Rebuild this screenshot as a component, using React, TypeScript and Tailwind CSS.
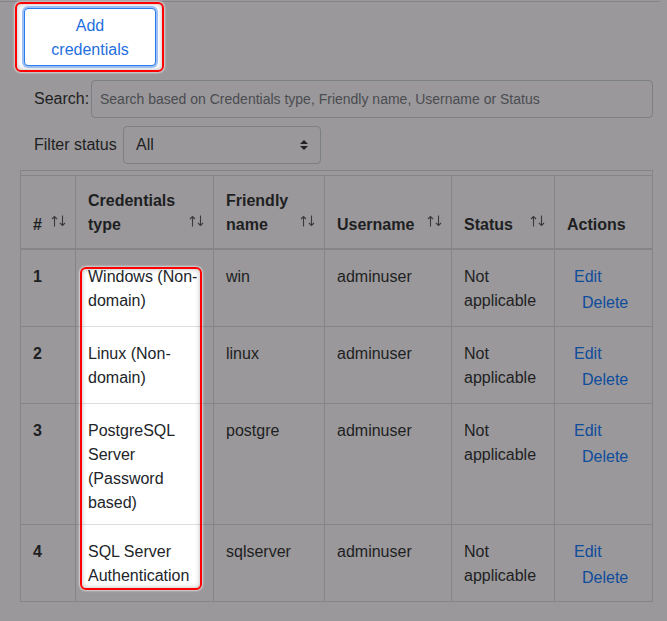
import { ReactNode } from 'react';

type Row = {
  id: number;
  type: string;
  name: string;
  user: string;
  status: string;
};

const ROWS: Row[] = [
  { id: 1, type: 'Windows (Non-domain)', name: 'win', user: 'adminuser', status: 'Not applicable' },
  { id: 2, type: 'Linux (Non-domain)', name: 'linux', user: 'adminuser', status: 'Not applicable' },
  { id: 3, type: 'PostgreSQL Server (Password based)', name: 'postgre', user: 'adminuser', status: 'Not applicable' },
  { id: 4, type: 'SQL Server Authentication', name: 'sqlserver', user: 'adminuser', status: 'Not applicable' },
];

const SortIcon = () => (
  <svg
    className="absolute bottom-[21px] right-[9px]"
    width="15"
    height="12"
    viewBox="0 0 15 12"
    fill="none"
    stroke="#3a3a3d"
    strokeWidth="1.1"
  >
    <path d="M3.5 1.5v10M1 4l2.5-2.5L6 4" />
    <path d="M11.5 0.5v10M9 8l2.5 2.5L14 8" />
  </svg>
);

const SortHead = ({ children, width, first }: { children: ReactNode; width: string; first?: boolean }) => (
  <th
    className={`relative ${width} border-t border-b-2 border-[rgba(0,0,0,0.13)] pt-[13px] pb-[11px] pl-3 pr-[30px] text-left align-bottom font-bold ${
      first ? '' : 'border-l'
    }`}
  >
    {children}
    <SortIcon />
  </th>
);

const cell = 'border-b border-l border-[rgba(0,0,0,0.13)] px-3 pt-[15px] pb-[9px] align-top';

export default function App() {
  return (
    <div className="min-h-[621px] w-[667px] bg-[#9a989b] pt-px font-['Liberation_Sans',Arial,sans-serif] text-[16px] leading-6 text-[#1e1f22]">
      <div className="h-px w-[660px] bg-[#858488]" />

      {/* highlighted step: add button */}
      <div className="ml-[15px] w-[149px] rounded-md border-2 border-[#f00] bg-white py-1 pl-[7px] shadow-[inset_0_0_5px_rgba(0,0,0,0.28),0_0_2px_1px_rgba(255,255,255,0.6)]">
        <button className="w-[132px] rounded border border-[#2b7be8] bg-white px-3 pt-[5px] pb-[3px] text-center text-[#1f6fe0] shadow-[0_0_0_2px_#9cc0f5]">
          Add credentials
        </button>
      </div>

      <div className="mt-2 flex items-center pl-[34px]">
        <label className="w-[57px]">Search:</label>
        <input
          type="text"
          placeholder="Search based on Credentials type, Friendly name, Username or Status"
          className="h-[38px] w-[562px] rounded border border-[#7c7f83] bg-transparent px-2 text-[14px] outline-none placeholder:text-[#4a4c50]"
        />
      </div>

      <div className="mt-2 flex items-center pl-[34px]">
        <label className="w-[89px]">Filter status</label>
        <div className="flex h-[38px] w-[198px] items-center justify-between rounded border border-[#7c7f83] px-3">
          <span>All</span>
          <svg width="8" height="10" viewBox="0 0 4 5">
            <path d="M2 0L0 2h4zm0 5L0 3h4z" fill="#1f2326" />
          </svg>
        </div>
      </div>

      <div className="relative ml-5 mt-1.5 w-[633px] border-x border-t border-[rgba(0,0,0,0.13)] pt-1">
        {/* highlighted step: credentials type column */}
        <div className="absolute left-[59px] top-[96px] h-[323px] w-[122px] rounded-md border-2 border-[#f00] bg-white shadow-[inset_0_0_5px_rgba(0,0,0,0.28),0_0_2px_1px_rgba(255,255,255,0.6)]" />

        <table className="relative z-10 w-full table-fixed border-separate border-spacing-0">
          <thead>
            <tr>
              <SortHead width="w-[54px]" first>
                #
              </SortHead>
              <SortHead width="w-[138px]">Credentials type</SortHead>
              <SortHead width="w-[111px]">Friendly name</SortHead>
              <SortHead width="w-[127px]">Username</SortHead>
              <SortHead width="w-[103px]">Status</SortHead>
              <th className="w-[98px] border-l border-t border-b-2 border-[rgba(0,0,0,0.13)] pt-[13px] pb-[11px] px-3 text-left align-bottom font-bold">
                Actions
              </th>
            </tr>
          </thead>
          <tbody>
            {ROWS.map((r) => (
              <tr key={r.id}>
                <th className="border-b border-[rgba(0,0,0,0.13)] px-3 pt-[15px] pb-[9px] text-left align-top font-bold">
                  {r.id}
                </th>
                <td className={`${cell} text-[#212529]`}>{r.type}</td>
                <td className={cell}>{r.name}</td>
                <td className={cell}>{r.user}</td>
                <td className={cell}>{r.status}</td>
                <td className={cell}>
                  <div className="flex flex-col items-start text-[#0f4c9c]">
                    <a className="ml-[7px]">Edit</a>
                    <a className="ml-[15px] my-[2px]">Delete</a>
                  </div>
                </td>
              </tr>
            ))}
          </tbody>
        </table>
      </div>
    </div>
  );
}
